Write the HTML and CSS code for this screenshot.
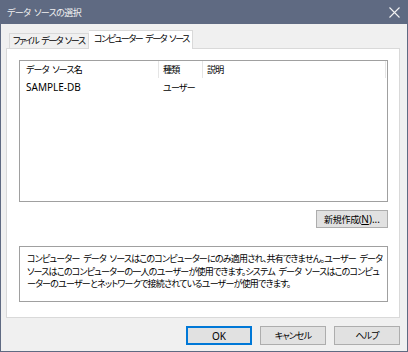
FILE: index.html
```html
<!DOCTYPE html>
<html lang="ja">
<head>
<meta charset="utf-8">
<title>データ ソースの選択</title>
<link rel="stylesheet" href="styles.css">
</head>
<body>
<div class="window">
  <div class="titlebar">
    <span class="title">データ ソースの選択</span>
    <svg class="close" width="11" height="11" viewBox="0 0 11 11"><path d="M0.5 0.5 L10.5 10.5 M10.5 0.5 L0.5 10.5" stroke="#f2f2f2" stroke-width="1.1" fill="none"/></svg>
  </div>
  <div class="content">
    <div class="tabs">
      <div class="tab">ファイル データ ソース</div>
      <div class="tab active">コンピューター データ ソース</div>
    </div>
    <div class="panel">
      <div class="list">
        <div class="list-head">
          <div class="col c1">データ ソース名</div>
          <div class="col c2">種類</div>
          <div class="col c3">説明</div>
        </div>
        <div class="list-row">
          <div class="cell c1 latin">SAMPLE-DB</div>
          <div class="cell c2">ユーザー</div>
          <div class="cell c3"></div>
        </div>
      </div>
      <div class="new-row">
        <button class="btn new">新規作成(<u class="latin">N</u><span class="latin">)...</span></button>
      </div>
      <div class="desc">コンピューター データ ソースはこのコンピューターにのみ適用され、共有できません。ユーザー データ<br>ソースはこのコンピューターの一人のユーザーが使用できます。システム データ ソースはこのコンピュ<br>ーターのユーザーとネットワークで接続されているユーザーが使用できます。</div>
    </div>
    <div class="buttons">
      <button class="btn default"><span class="latin">OK</span></button>
      <button class="btn">キャンセル</button>
      <button class="btn">ヘルプ</button>
    </div>
  </div>
</div>
</body>
</html>
```

FILE: styles.css
```css
* { box-sizing: border-box; }
html, body { margin: 0; padding: 0; }
body {
  width: 408px;
  height: 352px;
  font-family: "Noto Sans", "Noto Sans CJK JP", sans-serif;
  font-size: 9px;
  color: #000;
  font-feature-settings: "palt";
  word-spacing: 2px;
}
.latin { font-size: 10px; letter-spacing: 0; word-spacing: 0; }
.window {
  width: 408px;
  height: 352px;
  border: 1px solid #5f6a82;
  border-top: none;
  background: #f0f0f0;
  display: flex;
  flex-direction: column;
}
.titlebar {
  height: 24px;
  background: #5f6a82;
  color: #f2f2f2;
  display: flex;
  align-items: center;
  justify-content: space-between;
  padding: 0 6px 0 6px;
  flex: none;
}
.title { letter-spacing: -0.6px; }
.close { margin-right: 1px; }
.content {
  flex: 1;
  padding: 6px 7px 0 5px;
  display: flex;
  flex-direction: column;
}
.tabs {
  display: flex;
  align-items: flex-end;
  height: 18px;
  padding-left: 3px;
  position: relative;
  z-index: 1;
}
.tab {
  height: 15px;
  width: 80px;
  border: 1px solid #d9d9d9;
  border-bottom: none;
  background: #f0f0f0;
  padding: 0 0 0 3px;
  line-height: 14px;
  white-space: nowrap;
  overflow: hidden;
  letter-spacing: -1.45px;
}
.tab.active {
  width: 104px;
  height: 19px;
  margin-bottom: -1px;
  background: #fff;
  border-left: none;
  padding: 0 0 0 5px;
  line-height: 16px;
  letter-spacing: -1.4px;
}
.panel {
  height: 270px;
  background: #fff;
  border: 1px solid #d9d9d9;
  padding: 11px 11px 0 12px;
  display: flex;
  flex-direction: column;
}
.list {
  height: 142px;
  border: 1px solid #a0a0a0;
  background: #fff;
}
.list-head, .list-row {
  display: flex;
  height: 17px;
  align-items: center;
}
.list-row { height: 18px; }
.col, .cell {
  height: 100%;
  display: flex;
  align-items: center;
  white-space: nowrap;
  letter-spacing: -0.8px;
}
.col { border-right: 1px solid #e5e5e5; }
.c1 { width: 139px; padding-left: 6px; }
.c2 { width: 44px; padding-left: 4px; }
.c3 { flex: 1; padding-left: 4px; }
.list-head .c3 { margin-right: 1px; }
.cell.latin { letter-spacing: 0; }
.new-row {
  display: flex;
  justify-content: flex-end;
  margin-top: 8px;
}
.btn {
  font: inherit;
  font-feature-settings: "palt";
  height: 18px;
  padding: 0;
  background: #e1e1e1;
  border: 1px solid #adadad;
  color: #000;
  letter-spacing: -0.9px;
}
.btn.new { width: 72px; letter-spacing: -0.3px; }
.btn .latin { letter-spacing: 0; }
.desc {
  margin-top: 18px;
  height: 56px;
  border: 1px solid #a0a0a0;
  padding: 6px 7px;
  line-height: 12.5px;
  white-space: nowrap;
  letter-spacing: -0.78px;
}
.buttons {
  display: flex;
  justify-content: flex-end;
  gap: 8px;
  margin-top: 8px;
}
.buttons .btn { width: 66px; height: 19px; }
.btn.default {
  border-color: #0078d7;
  box-shadow: inset 0 0 0 1px #0078d7;
}
```
